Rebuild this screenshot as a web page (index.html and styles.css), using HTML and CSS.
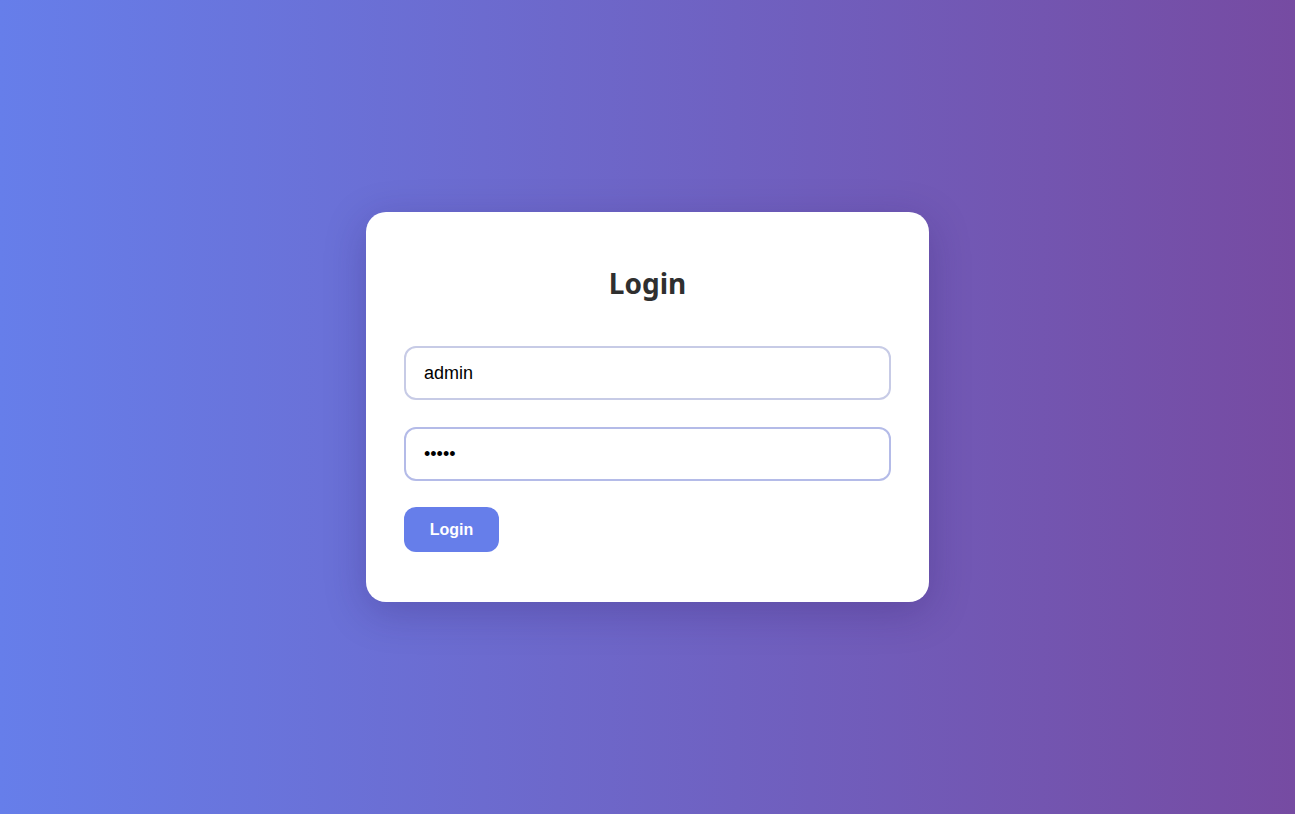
FILE: index.html
```html
<!DOCTYPE html>
<html lang="en">
<head>
<meta charset="utf-8">
<title>Login</title>
<link rel="stylesheet" href="styles.css">
</head>
<body>
<main class="page">
  <form class="card">
    <h2 class="title">Login</h2>
    <input class="field" type="text" value="admin">
    <input class="field field-focus" type="password" value="admin" autofocus>
    <div class="actions">
      <button class="btn" type="button">Login</button>
    </div>
  </form>
</main>
</body>
</html>
```
FILE: styles.css
```css
* { box-sizing: border-box; }
html, body { margin: 0; height: 100%; }
body {
  background: linear-gradient(90deg, #667eea 0%, #764ba2 100%);
  font-family: "Liberation Sans", Arial, sans-serif;
}
.page {
  height: 100vh;
  display: flex;
  align-items: center;
  justify-content: center;
}
.card {
  width: 563px;
  background: #fff;
  border-radius: 20px;
  padding: 40px 38px 50px;
  box-shadow: 0 10px 40px rgba(40, 20, 90, 0.25);
  display: flex;
  flex-direction: column;
}
.title {
  margin: 0 0 32px;
  text-align: center;
  font-family: "Noto Sans", "Open Sans", sans-serif;
  font-weight: 700;
  font-size: 28px;
  line-height: 62px;
  color: #2f2f2f;
}
.field {
  width: 100%;
  height: 54px;
  border: 2px solid #c7cbe6;
  border-radius: 12px;
  padding: 0 18px;
  font-family: "Liberation Sans", Arial, sans-serif;
  font-size: 18px;
  color: #000;
  background: #fff;
  outline: none;
  margin-bottom: 27px;
  caret-color: #000;
}
.field-focus { border-color: #b4bbe8; margin-bottom: 26px; }
.actions { display: flex; }
.btn {
  width: 95px;
  height: 45px;
  padding: 0;
  background: #667eea;
  color: #fff;
  border: none;
  border-radius: 12px;
  font-family: "Liberation Sans", Arial, sans-serif;
  font-weight: 700;
  font-size: 16px;
  cursor: pointer;
}
```
